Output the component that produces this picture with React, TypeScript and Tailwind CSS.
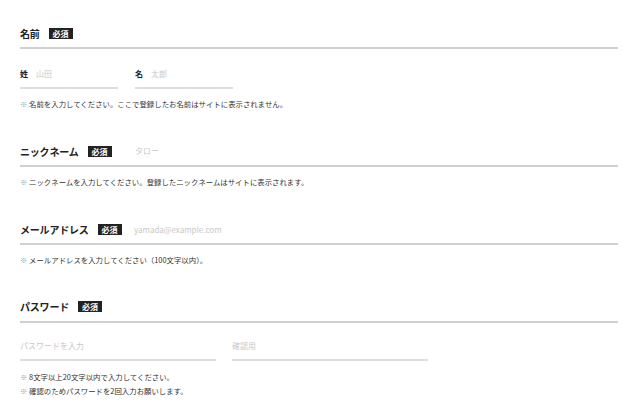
import React from "react";

const font = { fontFamily: '"Noto Sans CJK JP", "Noto Sans", sans-serif' };

function Badge() {
  return (
    <span className="ml-[9px] inline-flex h-[11px] items-center bg-[#222222] px-[4px] text-[8px] font-bold leading-none text-white">
      必須
    </span>
  );
}

function Title({ children }: { children: React.ReactNode }) {
  return (
    <span className="text-[10px] font-bold leading-[15px] tracking-[-0.02em] text-[#222222]">
      {children}
    </span>
  );
}

function Note({ children }: { children: React.ReactNode }) {
  return (
    <p className="text-[7.4px] leading-[14px] text-[#333333]">
      <span className="text-[#9a9a9a]">※</span> {children}
    </p>
  );
}

function Field({
  label,
  placeholder,
  className,
}: {
  label?: string;
  placeholder: string;
  className: string;
}) {
  return (
    <div className={`flex h-[24px] items-center border-b-2 border-[#dedede] pb-[4px] ${className}`}>
      {label && (
        <span className="mr-[8px] text-[8px] font-bold leading-[18px] text-[#222222]">{label}</span>
      )}
      <input
        className="w-full min-w-0 bg-transparent text-[8px] leading-[18px] text-[#222222] outline-none placeholder:text-[#c8c8c8]"
        placeholder={placeholder}
      />
    </div>
  );
}

export default function App() {
  return (
    <div className="min-h-[418px] w-[640px] bg-white pl-[20px] pr-[22px] pt-[26px]" style={font}>
      {/* 名前 */}
      <section>
        <div className="flex h-[23px] items-center border-b-2 border-[#d0d0d0] pb-[6px]">
          <Title>名前</Title>
          <Badge />
        </div>
        <div className="mt-[16px] flex gap-[17px]">
          <Field label="姓" placeholder="山田" className="w-[98px]" />
          <Field label="名" placeholder="太郎" className="w-[98px]" />
        </div>
        <div className="mt-[8px]">
          <Note>名前を入力してください。ここで登録したお名前はサイトに表示されません。</Note>
        </div>
      </section>

      {/* ニックネーム */}
      <section className="mt-[33px]">
        <div className="flex h-[23px] items-center border-b-2 border-[#d0d0d0] pb-[6px]">
          <div className="flex w-[115px] items-center">
            <Title>ニックネーム</Title>
            <Badge />
          </div>
          <input
            className="flex-1 bg-transparent pb-[2px] text-[8px] leading-[15px] outline-none placeholder:text-[#c8c8c8]"
            placeholder="タロー"
          />
        </div>
        <div className="mt-[8px]">
          <Note>ニックネームを入力してください。登録したニックネームはサイトに表示されます。</Note>
        </div>
      </section>

      {/* メールアドレス */}
      <section className="mt-[33px]">
        <div className="flex h-[23px] items-center border-b-2 border-[#d0d0d0] pb-[6px]">
          <div className="flex w-[114px] items-center">
            <Title>メールアドレス</Title>
            <Badge />
          </div>
          <input
            className="flex-1 bg-transparent pb-[1px] text-[8px] leading-[15px] outline-none placeholder:text-[#c8c8c8]"
            placeholder="yamada@example.com"
          />
        </div>
        <div className="mt-[8px]">
          <Note>メールアドレスを入力してください（100文字以内）。</Note>
        </div>
      </section>

      {/* パスワード */}
      <section className="mt-[32px]">
        <div className="flex h-[24px] items-center border-b-2 border-[#d0d0d0] pb-[7px]">
          <Title>パスワード</Title>
          <Badge />
        </div>
        <div className="mt-[14px] flex gap-[16px]">
          <Field placeholder="パスワードを入力" className="w-[196px]" />
          <Field placeholder="確認用" className="w-[196px]" />
        </div>
        <div className="mt-[9px]">
          <Note>8文字以上20文字以内で入力してください。</Note>
          <Note>確認のためパスワードを2回入力お願いします。</Note>
        </div>
      </section>
    </div>
  );
}
